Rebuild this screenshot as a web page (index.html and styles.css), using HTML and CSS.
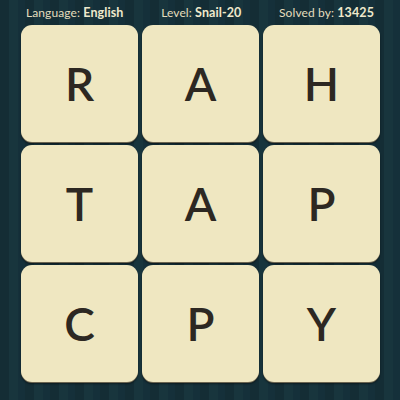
FILE: index.html
```html
<!DOCTYPE html>
<html>
<head>
<meta charset="utf-8">
<link rel="stylesheet" href="styles.css">
</head>
<body>
<div class="page">
  <div class="header">
    <span class="item">Language: <b>English</b></span>
    <span class="item">Level: <b>Snail-20</b></span>
    <span class="item">Solved by: <b>13425</b></span>
  </div>
  <div class="board">
    <div class="tile">R</div>
    <div class="tile">A</div>
    <div class="tile">H</div>
    <div class="tile">T</div>
    <div class="tile">A</div>
    <div class="tile">P</div>
    <div class="tile">C</div>
    <div class="tile">P</div>
    <div class="tile">Y</div>
  </div>
</div>
</body>
</html>
```

FILE: styles.css
```css
html, body {
  margin: 0;
  padding: 0;
}
body {
  width: 400px;
  height: 400px;
  overflow: hidden;
  background-color: #16323a;
  background-image: repeating-linear-gradient(90deg,
    #142d35 0px, #142d35 9px,
    #18353d 9px, #18353d 18px,
    #15303a 18px, #15303a 25px);
  font-family: "Lato", "DejaVu Sans", sans-serif;
}
.page {
  display: flex;
  flex-direction: column;
  width: 400px;
}
.header {
  height: 25px;
  display: flex;
  justify-content: space-between;
  align-items: center;
  padding: 0 26px 0 26px;
  color: #e4ddbd;
  font-size: 12px;
  letter-spacing: 0.1px;
}
.header b {
  font-weight: 700;
  color: #efe9cc;
  font-size: 12.5px;
}
.board {
  margin-left: 21px;
  display: grid;
  grid-template-columns: repeat(3, 117px);
  grid-auto-rows: 117px;
  gap: 3px 4px;
}
.tile {
  background: #efe7c1;
  border-radius: 11px;
  box-shadow: 0 1px 0 #6b6450, 0 2px 2px rgba(0,0,0,0.45);
  display: flex;
  align-items: center;
  justify-content: center;
  color: #2d2822;
  font-size: 46px;
  font-weight: 600;
  line-height: 1;
}
```
